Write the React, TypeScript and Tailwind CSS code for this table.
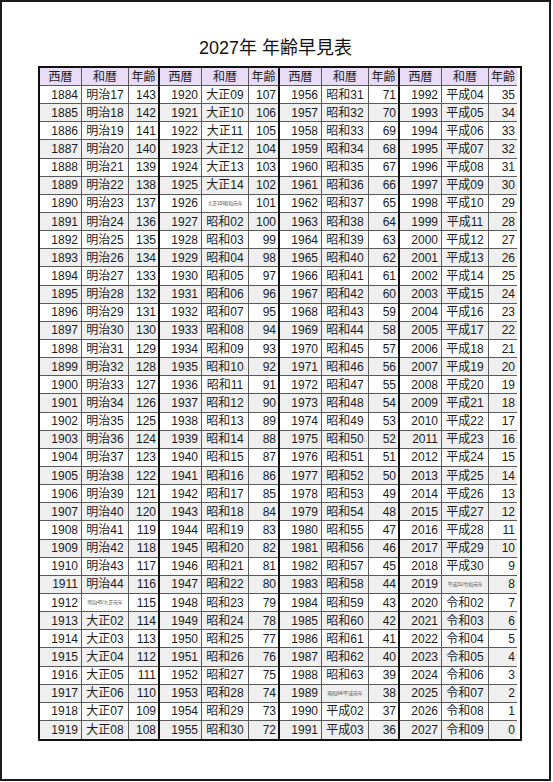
import React from 'react';

const BASE = 2027;

function wareki(year: number): { text: string; small?: boolean } {
  const pad = (n: number) => String(n).padStart(2, '0');
  if (year === 1912) return { text: '明治45/大正元年', small: true };
  if (year === 1926) return { text: '大正15/昭和元年', small: true };
  if (year === 1989) return { text: '昭和64/平成元年', small: true };
  if (year === 2019) return { text: '平成31/令和元年', small: true };
  if (year < 1912) return { text: `明治${pad(year - 1867)}` };
  if (year < 1926) return { text: `大正${pad(year - 1911)}` };
  if (year < 1989) return { text: `昭和${pad(year - 1925)}` };
  if (year < 2019) return { text: `平成${pad(year - 1988)}` };
  return { text: `令和${pad(year - 2018)}` };
}

const rows = Array.from({ length: 36 }, (_, r) => r);
const groups = [0, 1, 2, 3];

export default function App() {
  return (
    <div className="w-[553px] h-[782px] bg-white">
      <div
        className="w-[551px] h-[781px] border-2 border-[#1a1a1a] flex flex-col items-start"
        style={{ fontFamily: '"Liberation Sans", "Noto Sans CJK JP", sans-serif' }}
      >
        {/* Title */}
        <div className="w-full h-[26px] mt-[33px] mb-[5px] text-center text-[18px] leading-[26px] text-[#111]">
          2027年 年齢早見表
        </div>

        {/* Table */}
        <div className="ml-[36px] w-[484px] border-2 border-[#111] grid grid-cols-[42px_47px_29px_2px_42px_47px_29px_2px_42px_47px_29px_2px_42px_47px_28px] text-[12px] text-[#1a1a1a]">
          {/* Header */}
          {groups.map((g) => (
            <React.Fragment key={`h${g}`}>
              <div className="h-[18px] bg-[#e8dcf6] border-r border-b border-[#5a5a5a] flex items-center justify-center leading-none">西暦</div>
              <div className="h-[18px] bg-[#e8dcf6] border-r border-b border-[#5a5a5a] flex items-center justify-center leading-none">和暦</div>
              <div className="h-[18px] bg-[#e8dcf6] border-b border-[#5a5a5a] flex items-center justify-center leading-none">年齢</div>
              {g < 3 && <div className="h-[18px] bg-[#111]" />}
            </React.Fragment>
          ))}
          {rows.map((r) => {
            const bg = r % 2 === 1 ? 'bg-[#efefef]' : 'bg-white';
            const last = r === 35;
            return groups.map((g) => {
              const year = 1884 + g * 36 + r;
              const w = wareki(year);
              const bb = last ? '' : 'border-b';
              return (
                <React.Fragment key={`${r}-${g}`}>
                  <div className={`h-[18.15px] ${bg} border-r ${bb} border-[#5a5a5a] flex items-center justify-end pr-[3px] leading-none`}>
                    {year}
                  </div>
                  <div className={`h-[18.15px] ${bg} border-r ${bb} border-[#5a5a5a] flex items-center justify-center leading-none overflow-hidden whitespace-nowrap`}>
                    {w.small ? (
                      <span className="text-[5px] text-[#555] tracking-[-0.2px]">{w.text}</span>
                    ) : (
                      w.text
                    )}
                  </div>
                  <div className={`h-[18.15px] ${bg} ${bb} border-[#5a5a5a] flex items-center justify-end pr-[2px] leading-none`}>
                    {BASE - year}
                  </div>
                  {g < 3 && <div className="h-[18.15px] bg-[#111]" />}
                </React.Fragment>
              );
            });
          })}
        </div>
      </div>
    </div>
  );
}
